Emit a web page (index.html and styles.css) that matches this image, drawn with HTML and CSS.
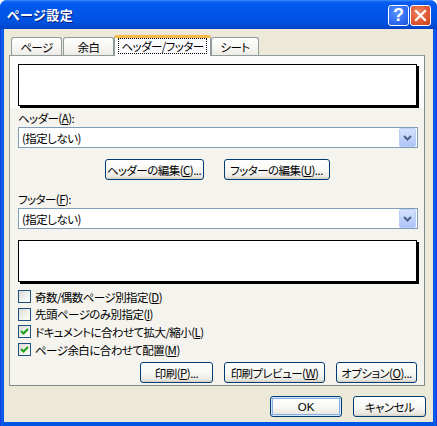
FILE: index.html
```html
<!DOCTYPE html>
<html>
<head>
  <title>ページ設定</title>
  <link rel="stylesheet" href="styles.css">
</head>
<body>
  <div class="window">
    <div class="titlebar">
      <span class="title">ページ設定</span>
      <div class="caption-buttons">
        <span class="cap-btn help">?</span>
        <span class="cap-btn close">
          <svg width="13" height="13" viewBox="0 0 13 13"><path d="M2 2 L11 11 M11 2 L2 11" stroke="#fff" stroke-width="2.2" stroke-linecap="square"/></svg>
        </span>
      </div>
    </div>
    <div class="client">
      <div class="tabs">
        <span class="tab tab-page">ページ</span>
        <span class="tab tab-margin">余白</span>
        <span class="tab tab-active"><span class="focus">ヘッダー/フッター</span></span>
        <span class="tab tab-sheet">シート</span>
      </div>
      <div class="panel">
        <div class="preview-band">
          <div class="preview"></div>
        </div>
        <div class="field-label label-header">ヘッダー(<u>A</u>):</div>
        <div class="combo">
          <span class="combo-text">(指定しない)</span>
          <span class="combo-btn">
            <svg width="9" height="6" viewBox="0 0 9 6"><path d="M1 1 L4.5 4.5 L8 1" fill="none" stroke="#4d6185" stroke-width="2"/></svg>
          </span>
        </div>
        <div class="edit-row">
          <span class="btn btn-header"><span>ヘッダーの編集(<u>C</u>)...</span></span>
          <span class="btn btn-footer"><span>フッターの編集(<u>U</u>)...</span></span>
        </div>
        <div class="field-label label-footer">フッター(<u>F</u>):</div>
        <div class="combo">
          <span class="combo-text">(指定しない)</span>
          <span class="combo-btn">
            <svg width="9" height="6" viewBox="0 0 9 6"><path d="M1 1 L4.5 4.5 L8 1" fill="none" stroke="#4d6185" stroke-width="2"/></svg>
          </span>
        </div>
        <div class="preview preview-footer"></div>
        <div class="checks">
          <div class="check-row"><span class="checkbox"></span><span>奇数/偶数ページ別指定(<u>D</u>)</span></div>
          <div class="check-row"><span class="checkbox"></span><span>先頭ページのみ別指定(<u>I</u>)</span></div>
          <div class="check-row"><span class="checkbox"><svg width="9" height="9" viewBox="0 0 9 9"><path d="M1 4 L3.5 6.5 L8 2" fill="none" stroke="#21a121" stroke-width="2.2"/></svg></span><span>ドキュメントに合わせて拡大/縮小(<u>L</u>)</span></div>
          <div class="check-row"><span class="checkbox"><svg width="9" height="9" viewBox="0 0 9 9"><path d="M1 4 L3.5 6.5 L8 2" fill="none" stroke="#21a121" stroke-width="2.2"/></svg></span><span>ページ余白に合わせて配置(<u>M</u>)</span></div>
        </div>
        <div class="print-row">
          <span class="btn btn-print"><span>印刷(<u>P</u>)...</span></span>
          <span class="btn btn-preview"><span>印刷プレビュー(<u>W</u>)</span></span>
          <span class="btn btn-options"><span>オプション(<u>O</u>)...</span></span>
        </div>
      </div>
      <div class="dialog-buttons">
        <span class="btn btn-ok">OK</span>
        <span class="btn btn-cancel">キャンセル</span>
      </div>
    </div>
  </div>
</body>
</html>
```

FILE: styles.css
```css
body {
  margin: 0;
  font-family: "Noto Sans CJK JP", "Noto Sans", sans-serif;
  font-size: 11.5px;
  letter-spacing: -0.55px;
  font-feature-settings: "palt";
  color: #000;
  background: #fff;
}
u {
  text-decoration: underline;
  text-underline-offset: 1px;
}

/* window frame */
.window {
  width: 437px;
  height: 426px;
  box-sizing: border-box;
  display: flex;
  flex-direction: column;
  background: linear-gradient(to right, #0831d9 0, #166aee 2px, #0055e5 3px, #0055e5 434px, #166aee 435px, #0831d9 437px);
  border-radius: 7px 7px 0 0;
  overflow: hidden;
}
.titlebar {
  height: 29px;
  flex: none;
  display: flex;
  align-items: center;
  justify-content: space-between;
  padding: 0 6px 0 7px;
  background: linear-gradient(#3a8cff 0, #0a60f0 2px, #0058ee 5px, #0055e8 14px, #0052e0 22px, #0048d2 27px, #003dc0 29px);
}
.title {
  color: #fff;
  font-weight: bold;
  font-size: 13px;
  text-shadow: 1px 1px 0 #0a1e80;
  letter-spacing: 0.5px;
}
.caption-buttons {
  display: flex;
  gap: 1px;
  padding-top: 1px;
}
.cap-btn {
  width: 21px;
  height: 21px;
  box-sizing: border-box;
  border: 1px solid #fff;
  border-radius: 3px;
  display: flex;
  align-items: center;
  justify-content: center;
}
.help {
  background: radial-gradient(circle at 40% 35%, #5b94ff 0, #2f6cf2 60%, #1c4fd8 100%);
  color: #fff;
  font-family: "Liberation Sans", sans-serif;
  font-weight: bold;
  font-size: 18px;
  letter-spacing: 0;
}
.close {
  background: radial-gradient(circle at 40% 35%, #f08a6a 0, #e05a36 55%, #c8401c 100%);
}

/* client area */
.client {
  flex: 1;
  margin: 0 4px 4px;
  background: #ece9d8;
  padding-top: 6px;
}
.tabs {
  display: flex;
  align-items: flex-end;
  height: 20px;
  margin-left: 7px;
}
.tab {
  height: 18px;
  box-sizing: border-box;
  border: 1px solid #919b9c;
  border-bottom: none;
  border-radius: 3px 3px 0 0;
  background: linear-gradient(#fff, #f6f5f1 60%, #ecebe5);
  display: flex;
  align-items: center;
  justify-content: center;
  line-height: 14px;
}
.tab-page { width: 51px; margin-right: 1px; }
.tab-margin { width: 51px; }
.tab-active {
  width: 97px;
  height: 21px;
  margin-bottom: -1px;
  position: relative;
  z-index: 1;
  background: #fcfcfe;
  border-top: 3px solid #f7b945;
  border-radius: 3px 3px 0 0;
  padding-bottom: 2px;
}
.focus {
  outline: 1px dotted #000;
  padding: 0 2px;
  line-height: 14px;
}
.tab-sheet { width: 48px; }

.panel {
  margin-left: 5px;
  width: 416px;
  height: 331px;
  box-sizing: border-box;
  border: 1px solid #919b9c;
  border-right-color: #7f8a8b;
  border-bottom-color: #7f8a8b;
  background: #f4f3ee;
  padding: 0 7px 0 8px;
  display: flex;
  flex-direction: column;
}
.preview-band {
  margin: 0 -7px 0 -8px;
  padding: 8px 0 0 8px;
  background: linear-gradient(#fdfdfd, #fafaf8);
  height: 52px;
  box-sizing: border-box;
}
.preview {
  width: 399px;
  height: 42px;
  box-sizing: border-box;
  border: 1px solid #000;
  background: #fff;
  box-shadow: 2px 2px 0 #000;
}
.preview-footer {
  margin-top: 11px;
}

.field-label {
  line-height: 14px;
  height: 14px;
}
.label-header { margin-top: 3px; }
.label-footer { margin-top: 12px; }

.combo {
  width: 400px;
  height: 21px;
  box-sizing: border-box;
  border: 1px solid #7f9db9;
  background: #fff;
  margin-top: 2px;
  display: flex;
  align-items: center;
  justify-content: space-between;
  padding: 0 1px 0 3px;
}
.combo-btn {
  width: 17px;
  height: 19px;
  box-sizing: border-box;
  border: 1px solid #b9cdf6;
  border-radius: 2px;
  background: linear-gradient(#d6e3fe, #bcd0fa 60%, #aec4f6);
  display: flex;
  align-items: center;
  justify-content: center;
}

/* buttons */
.btn {
  height: 21px;
  box-sizing: border-box;
  border: 1px solid #003c74;
  border-radius: 3px;
  background: linear-gradient(#fff 0, #f8f8f5 50%, #ebeae4 85%, #d6d0c5 100%);
  display: flex;
  align-items: center;
  justify-content: center;
  line-height: 14px;
  white-space: nowrap;
}
.edit-row {
  display: flex;
  justify-content: center;
  gap: 20px;
  margin-top: 11px;
  margin-right: 1px;
}
.btn-header { width: 99px; }
.btn-footer { width: 106px; }

.checks {
  margin-top: 6px;
}
.check-row {
  height: 17.6px;
  display: flex;
  align-items: center;
  gap: 4px;
  line-height: 14px;
}
.checkbox {
  width: 13px;
  height: 13px;
  box-sizing: border-box;
  border: 1px solid #1c5180;
  background: linear-gradient(135deg, #dcdbd5, #f6f6f4 70%, #fff);
  display: flex;
  align-items: center;
  justify-content: center;
}

.print-row {
  display: flex;
  justify-content: flex-end;
  gap: 11px;
  margin-top: 4px;
}
.btn-print { width: 73px; }
.btn-preview { width: 101px; }
.btn-options { width: 81px; }

.dialog-buttons {
  display: flex;
  justify-content: flex-end;
  gap: 11px;
  margin-top: 10px;
  padding-right: 7px;
}
.btn-ok {
  width: 72px;
  box-shadow: inset 0 0 0 1px #cee7ff, inset 0 0 0 2px #89ade4;
  font-family: "Liberation Sans", sans-serif;
  letter-spacing: 0;
}
.btn-cancel { width: 73px; }
```
